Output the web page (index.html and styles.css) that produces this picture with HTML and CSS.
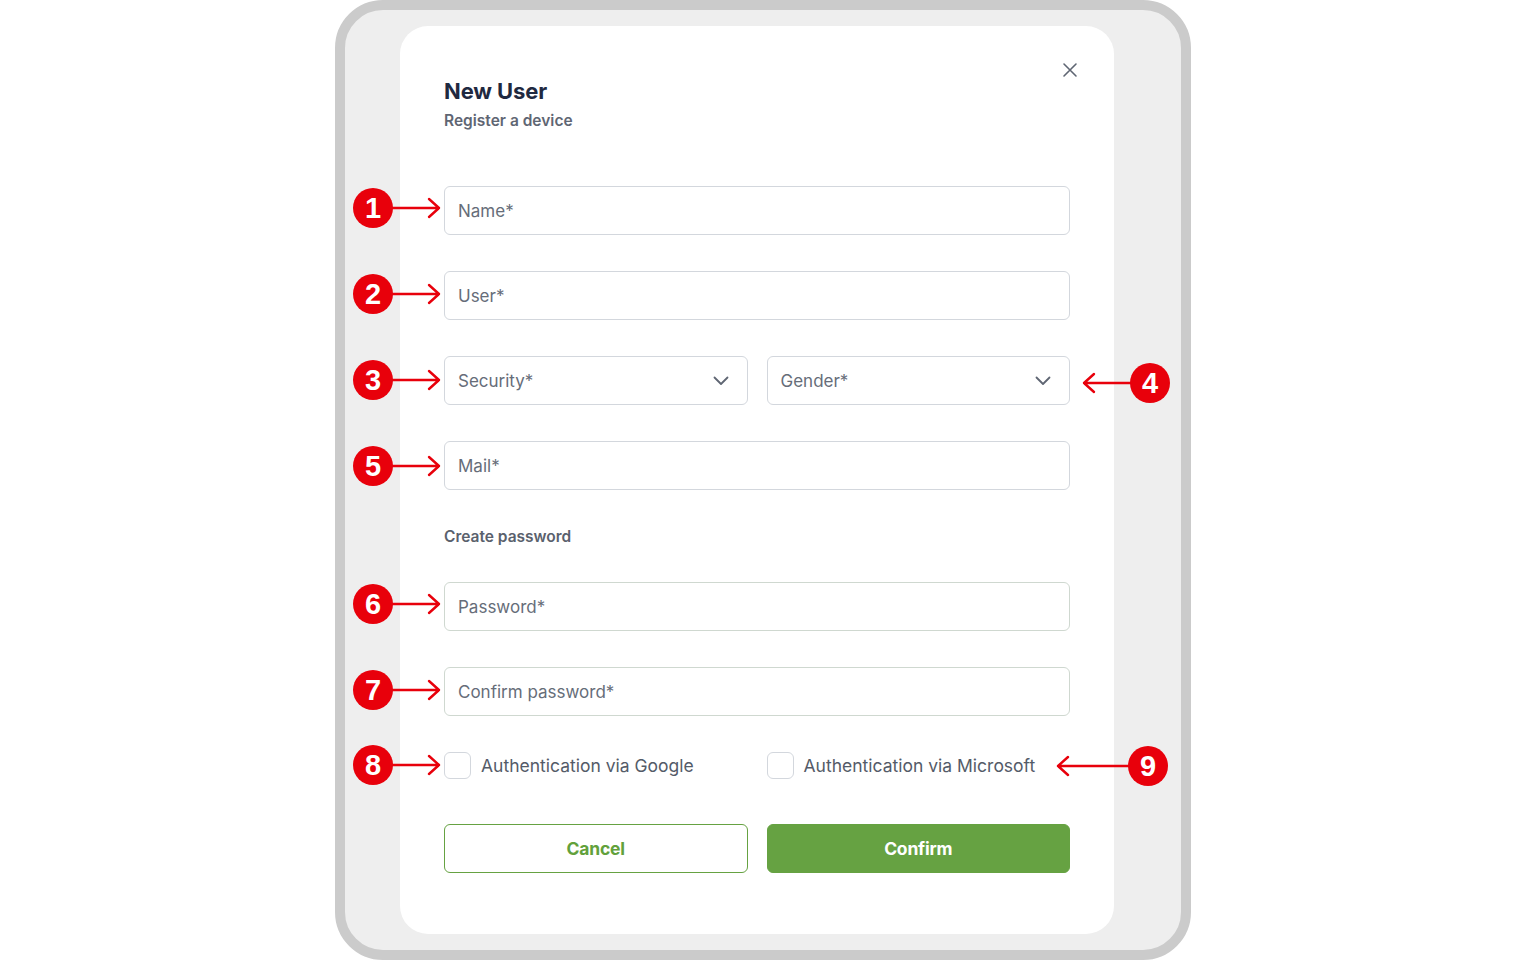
FILE: index.html
```html
<!DOCTYPE html>
<html lang="en">
<head>
<meta charset="utf-8">
<title>New User</title>
<link rel="stylesheet" href="styles.css">
</head>
<body>
<div class="frame">
  <div class="card">
    <button class="close" aria-label="Close">
      <svg width="16" height="16" viewBox="0 0 16 16"><path d="M2 2L14 14M14 2L2 14" stroke="#5f6673" stroke-width="1.6" stroke-linecap="round"/></svg>
    </button>
    <div class="head">
      <h1 class="title">New User</h1>
      <p class="subtitle">Register a device</p>
    </div>
    <form class="form">
      <div class="field"><span class="ph">Name*</span></div>
      <div class="field"><span class="ph">User*</span></div>
      <div class="row">
        <div class="field select"><span class="ph">Security*</span>
          <svg class="chev" width="16" height="10" viewBox="0 0 16 10"><path d="M1.5 1.5L8 8L14.5 1.5" fill="none" stroke="#5f6673" stroke-width="1.8" stroke-linecap="round" stroke-linejoin="round"/></svg>
        </div>
        <div class="field select"><span class="ph">Gender*</span>
          <svg class="chev" width="16" height="10" viewBox="0 0 16 10"><path d="M1.5 1.5L8 8L14.5 1.5" fill="none" stroke="#5f6673" stroke-width="1.8" stroke-linecap="round" stroke-linejoin="round"/></svg>
        </div>
      </div>
      <div class="field"><span class="ph">Mail*</span></div>
      <p class="section">Create password</p>
      <div class="field pw"><span class="ph">Password*</span></div>
      <div class="field pw"><span class="ph">Confirm password*</span></div>
      <div class="checks">
        <label class="check"><span class="box"></span><span>Authentication via Google</span></label>
        <label class="check"><span class="box"></span><span>Authentication via Microsoft</span></label>
      </div>
      <div class="actions">
        <button type="button" class="btn cancel">Cancel</button>
        <button type="button" class="btn confirm">Confirm</button>
      </div>
    </form>
  </div>
</div>

<svg class="arrows" width="1527" height="961" viewBox="0 0 1527 961">
  <g fill="none" stroke="#e8000b" stroke-width="2.4" stroke-linecap="round" stroke-linejoin="round">
    <path d="M392 208H439M429 199L439 208L429 217"/>
    <path d="M392 294H439M429 285L439 294L429 303"/>
    <path d="M392 380H439M429 371L439 380L429 389"/>
    <path d="M392 466H439M429 457L439 466L429 475"/>
    <path d="M392 604H439M429 595L439 604L429 613"/>
    <path d="M392 690H439M429 681L439 690L429 699"/>
    <path d="M392 765H439M429 756L439 765L429 774"/>
    <path d="M1131 383H1084M1094 374L1084 383L1094 392"/>
    <path d="M1129 766H1058M1068 757L1058 766L1068 775"/>
  </g>
</svg>
<div class="badge b1">1</div>
<div class="badge b2">2</div>
<div class="badge b3">3</div>
<div class="badge b4">4</div>
<div class="badge b5">5</div>
<div class="badge b6">6</div>
<div class="badge b7">7</div>
<div class="badge b8">8</div>
<div class="badge b9">9</div>
</body>
</html>
```

FILE: styles.css
```css
* { box-sizing: border-box; }
html, body { margin: 0; padding: 0; background: #ffffff; }
body {
  width: 1527px;
  height: 961px;
  position: relative;
  overflow: hidden;
  font-family: Inter, "Noto Sans", sans-serif;
}
.frame {
  margin-left: 335px;
  width: 856px;
  height: 960px;
  border: 10px solid #cbcbcb;
  border-radius: 48px;
  background: #eeeeee;
  padding: 16px 0 16px 55px;
}
.card {
  position: relative;
  width: 714px;
  height: 908px;
  background: #ffffff;
  border-radius: 28px;
  padding: 51px 44px 0 44px;
}
.close {
  position: absolute;
  top: 36px;
  right: 36px;
  width: 16px;
  height: 16px;
  padding: 0;
  border: 0;
  background: none;
  display: flex;
}
.title {
  margin: 0;
  font-size: 22px;
  line-height: 28px;
  font-weight: 700;
  color: #1f2940;
  letter-spacing: -0.1px;
}
.subtitle {
  margin: 6px 0 0 0;
  font-size: 15.5px;
  line-height: 20px;
  font-weight: 600;
  color: #5f6673;
}
.form {
  margin-top: 55px;
  display: flex;
  flex-direction: column;
}
.field {
  height: 49px;
  border: 1.3px solid #d3d7dd;
  border-radius: 6px;
  padding: 0 13px;
  display: flex;
  align-items: center;
  margin-bottom: 36px;
}
.field.pw { border-color: #cfd8d0; }
.ph {
  font-size: 17px;
  color: #666d79;
}
.row {
  display: flex;
  gap: 19px;
}
.row .field { flex: 1; justify-content: space-between; }
.chev { margin-right: 5px; }
.section {
  margin: 1px 0 35px 0;
  font-size: 15.5px;
  line-height: 20px;
  font-weight: 600;
  color: #5a616d;
}
.checks {
  display: flex;
  gap: 19px;
  margin-top: 0;
}
.check {
  flex: 1;
  display: flex;
  align-items: center;
  gap: 10px;
  font-size: 17.5px;
  color: #545b68;
}
.box {
  width: 27px;
  height: 27px;
  border: 1.5px solid #d3d7dd;
  border-radius: 6px;
}
.actions {
  display: flex;
  gap: 19px;
  margin-top: 45px;
}
.btn {
  flex: 1;
  height: 49px;
  border-radius: 6px;
  font-family: Inter, "Noto Sans", sans-serif;
  font-size: 17.5px;
  font-weight: 700;
  letter-spacing: -0.2px;
}
.cancel {
  background: #ffffff;
  border: 1.3px solid #66a242;
  color: #62a13b;
}
.confirm {
  background: #66a242;
  border: 1.3px solid #66a242;
  color: #ffffff;
}
.arrows {
  position: absolute;
  left: 0;
  top: 0;
  pointer-events: none;
}
.badge {
  position: absolute;
  width: 40px;
  height: 40px;
  margin: -20px 0 0 -20px;
  border-radius: 50%;
  background: #e8000b;
  color: #ffffff;
  font-family: "Liberation Sans", Arial, sans-serif;
  font-weight: 700;
  font-size: 29px;
  line-height: 40px;
  text-align: center;
}
.b1 { left: 373px; top: 208px; }
.b2 { left: 373px; top: 294px; }
.b3 { left: 373px; top: 380px; }
.b4 { left: 1150px; top: 383px; }
.b5 { left: 373px; top: 466px; }
.b6 { left: 373px; top: 604px; }
.b7 { left: 373px; top: 690px; }
.b8 { left: 373px; top: 765px; }
.b9 { left: 1148px; top: 766px; }
```
